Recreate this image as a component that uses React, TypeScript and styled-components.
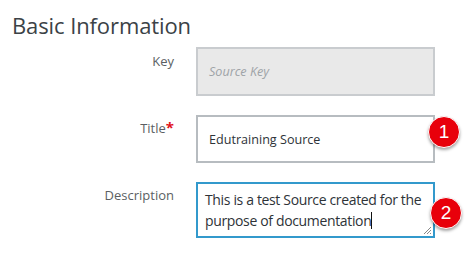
import React from 'react';
import styled, { createGlobalStyle } from 'styled-components';

const GlobalStyle = createGlobalStyle`
  html, body {
    margin: 0;
    padding: 0;
    background: #ffffff;
    font-family: "Open Sans", "Noto Sans", sans-serif;
  }
`;

const Page = styled.div`
  width: 476px;
  height: 272px;
  box-sizing: border-box;
  padding: 12px 0 0 12px;
  overflow: hidden;
`;

const Heading = styled.h2`
  margin: 0 0 9px 0;
  font-size: 22px;
  font-weight: 400;
  line-height: 26px;
  color: #3b4246;
  letter-spacing: -0.1px;
`;

const FormGrid = styled.div`
  display: grid;
  grid-template-columns: 162px 239px;
  column-gap: 22px;
  row-gap: 19px;
`;

const Label = styled.div<{ $top: number }>`
  text-align: right;
  font-size: 13px;
  line-height: 18px;
  color: #5b5f63;
  padding-top: ${p => p.$top}px;
`;

const Required = styled.span`
  color: #e0121b;
  font-weight: 700;
  font-size: 15px;
`;

const Field = styled.div`
  position: relative;
`;

const Input = styled.div<{ $disabled?: boolean; $height: number }>`
  box-sizing: border-box;
  height: ${p => p.$height}px;
  display: flex;
  align-items: center;
  padding: 0 11px;
  border: 2px solid ${p => (p.$disabled ? '#c9cccf' : '#b7bcc0')};
  background: ${p => (p.$disabled ? '#e9e9e9' : '#ffffff')};
  font-size: 12.6px;
  color: #2e3338;
`;

const Placeholder = styled.span`
  font-style: italic;
  color: #9ea3a7;
`;

const TextArea = styled.div`
  box-sizing: border-box;
  height: 56px;
  padding: 5px 6px 0 7px;
  border: 2px solid #3399cc;
  background: #ffffff;
  font-size: 14px;
  letter-spacing: -0.35px;
  line-height: 21px;
  color: #2e3338;
  position: relative;
`;

const Caret = styled.span`
  display: inline-block;
  width: 1px;
  height: 17px;
  background: #111;
  vertical-align: -3px;
`;

const Grip = styled.svg`
  position: absolute;
  right: 1px;
  bottom: 1px;
`;

const Badge = styled.div<{ $right: number; $top: number }>`
  position: absolute;
  right: ${p => p.$right}px;
  top: ${p => p.$top}px;
  width: 32px;
  height: 32px;
  box-sizing: border-box;
  border-radius: 50%;
  background: #e8000b;
  border: 1.5px solid #ffffff;
  box-shadow: 0 2px 3px rgba(0, 0, 0, 0.35);
  color: #ffffff;
  font-family: "Liberation Sans", Arial, sans-serif;
  font-size: 19px;
  display: flex;
  align-items: center;
  justify-content: center;
`;

export default function App() {
  return (
    <Page>
      <GlobalStyle />
      <Heading>Basic Information</Heading>
      <FormGrid>
        <Label $top={5}>Key</Label>
        <Field>
          <Input $disabled $height={49}>
            <Placeholder>Source Key</Placeholder>
          </Input>
        </Field>

        <Label $top={3}>
          Title<Required>*</Required>
        </Label>
        <Field>
          <Input $height={48}>Edutraining Source</Input>
          <Badge $right={-25} $top={1}>1</Badge>
        </Field>

        <Label $top={4}>Description</Label>
        <Field>
          <TextArea>
            This is a test Source created for the purpose of documentation
            <Caret />
            <Grip width="10" height="10" viewBox="0 0 10 10">
              <path d="M9 2 L2 9 M9 5 L5 9 M9 8 L8 9" stroke="#888" strokeWidth="1" />
            </Grip>
          </TextArea>
          <Badge $right={-27} $top={15}>2</Badge>
        </Field>
      </FormGrid>
    </Page>
  );
}
